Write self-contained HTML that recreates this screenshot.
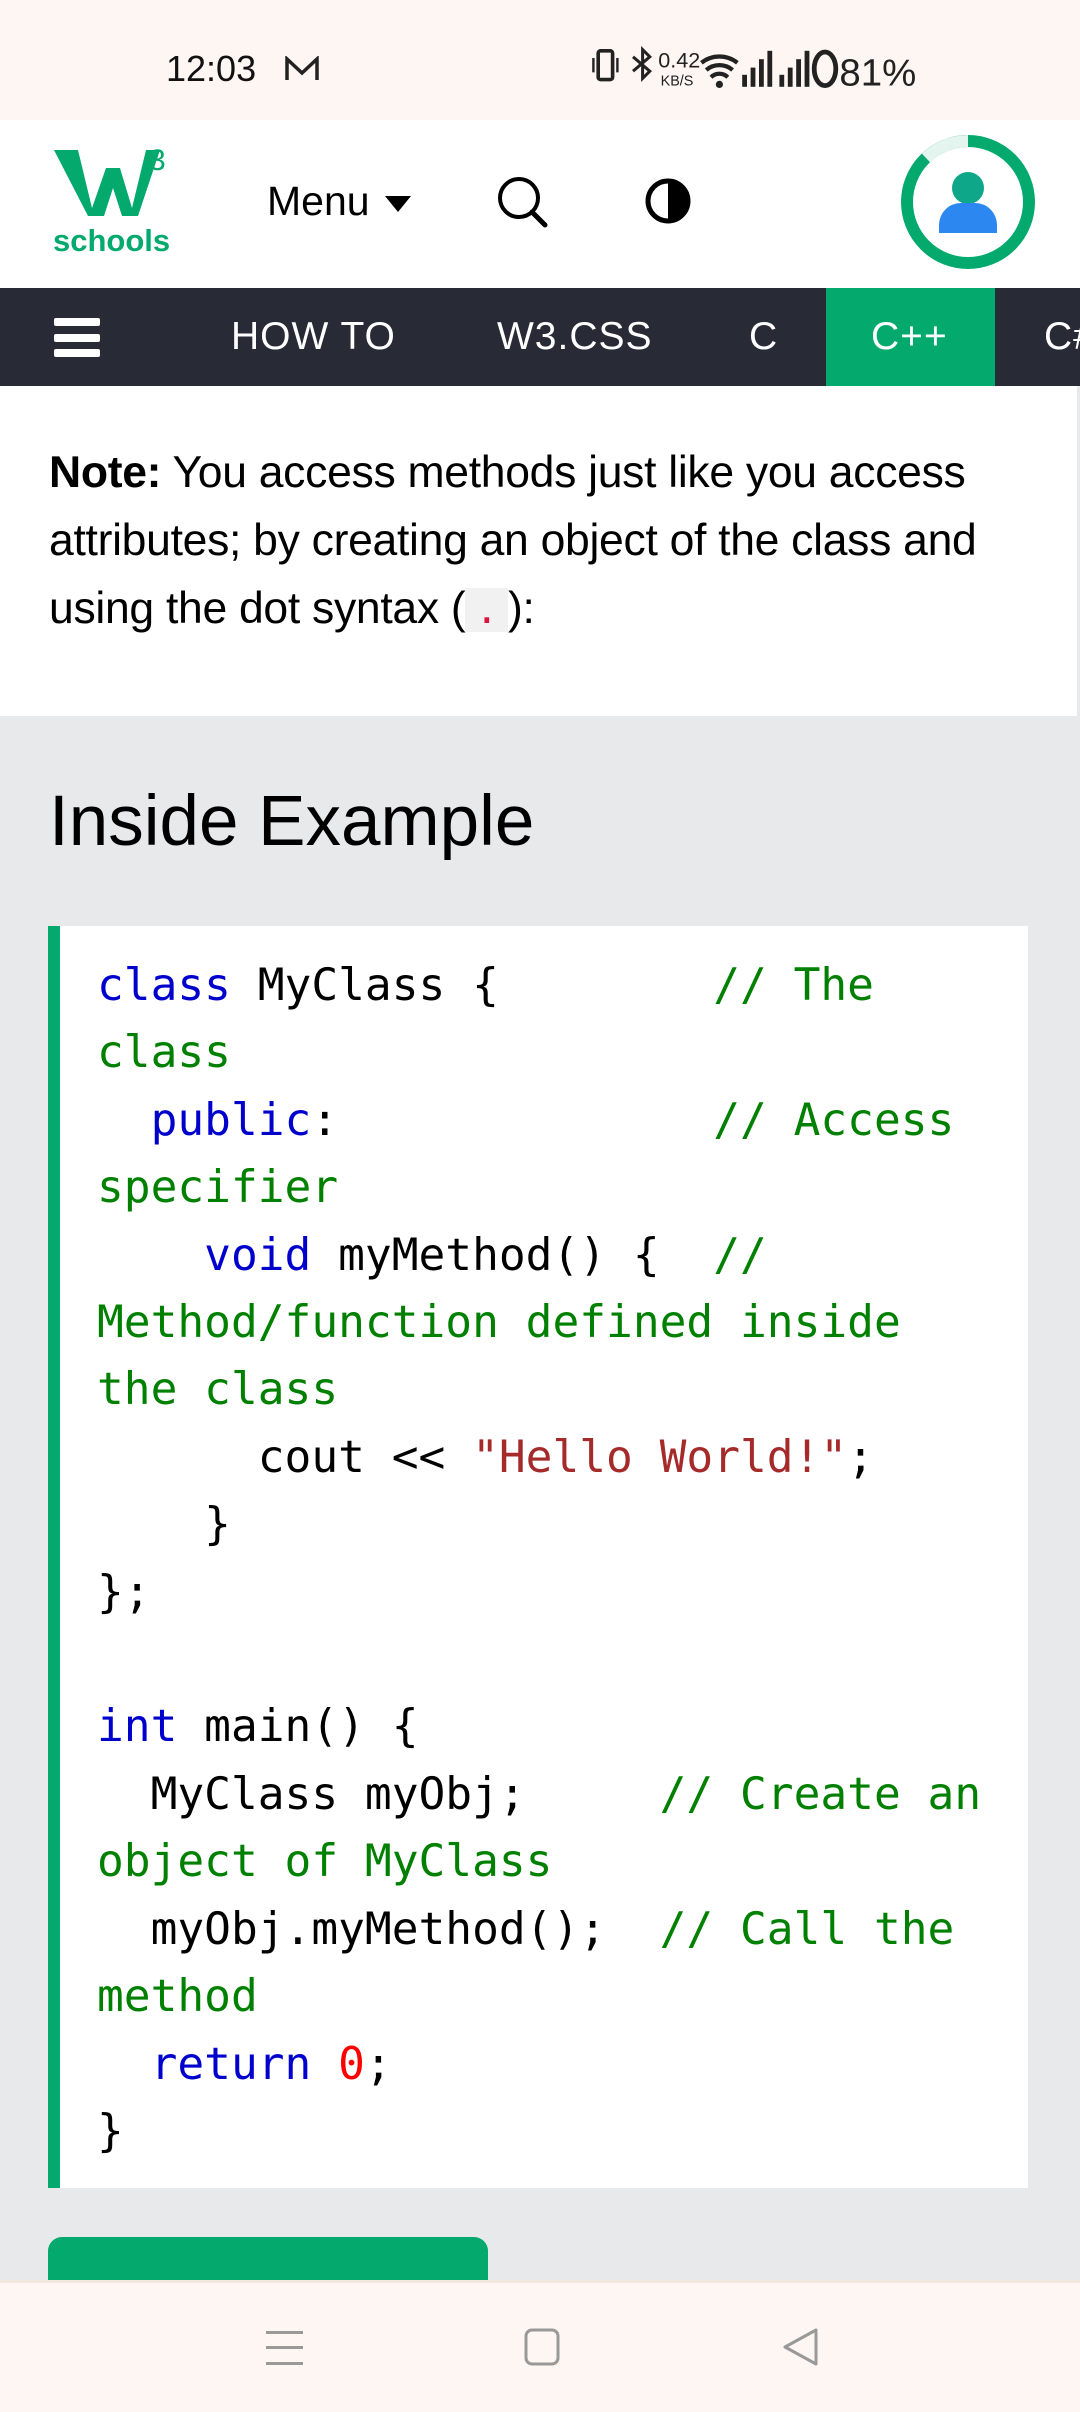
<!DOCTYPE html>
<html><head><meta charset="utf-8"><style>
*{margin:0;padding:0;box-sizing:border-box}
body{width:1080px;height:2412px;position:relative;overflow:hidden;background:#e7e9eb;font-family:"Liberation Sans",sans-serif}
.abs{position:absolute}
#status{left:0;top:0;width:1080px;height:120px;background:#fef6f3}
#hdr{left:0;top:120px;width:1080px;height:168px;background:#fff}
#nav{left:0;top:288px;width:1080px;height:98px;background:#282a35;color:#fff;font-size:39px;letter-spacing:1px}
#nav span{position:absolute;top:27px}
#note{left:0;top:386px;width:1077px;height:330px;background:#fff;font-size:44.5px;line-height:68px;color:#000;padding:53px 0 0 49px;letter-spacing:-0.3px}
code{font-family:"DejaVu Sans Mono",monospace;background:#f1f1f1;color:#dc143c;padding:0 10px;font-size:38px}
#h2{left:49px;top:781px;font-size:71px;color:#000}
#code{left:48px;top:926px;width:980px;height:1262px;background:#fff;border-left:12px solid #04aa6d}
pre{position:absolute;left:37px;top:26px;font-family:"DejaVu Sans Mono",monospace;font-size:44.5px;line-height:67.4px;color:#000}
.k{color:#0000cd}.c{color:#008000}.s{color:#a52a2a}.n{color:#f00}
#btn{left:48px;top:2237px;width:440px;height:120px;background:#04aa6d;border-radius:14px}
#bot{left:0;top:2280px;width:1080px;height:132px;background:#fdf6f3;border-top:3px solid #f3e6dc}
</style></head><body>
<div id="status" class="abs">
<div class="abs" style="left:166px;top:48px;font-size:36px;color:#111">12:03</div>
<svg class="abs" style="left:284px;top:56px" width="36" height="26" viewBox="0 0 36 26"><path d="M3 24V3l15 14L33 3v21" fill="none" stroke="#222" stroke-width="3.5"/></svg>
<svg class="abs" style="left:584px;top:46px" width="410" height="48" viewBox="0 0 330 40">
<rect x="6" y="4" width="12" height="24" rx="2" fill="none" stroke="#222" stroke-width="3"/>
<path d="M2 10v12M22 10v12" stroke="#222" stroke-width="2"/>
<path d="M35 9l14 12-6 6V3l6 6-14 12" fill="none" stroke="#222" stroke-width="2.5"/>
<text x="56" y="18" font-size="18" font-family="Liberation Sans" fill="#222">0.42</text>
<text x="58" y="33" font-size="12" font-family="Liberation Sans" fill="#222">KB/S</text>
<path d="M92 14a24 24 0 0 1 30 0M96 20a17 17 0 0 1 22 0M100 26a10 10 0 0 1 14 0" fill="none" stroke="#222" stroke-width="3.5"/>
<circle cx="107" cy="32" r="3" fill="#222"/>
<rect x="126" y="24" width="4" height="10" fill="#222"/><rect x="133" y="18" width="4" height="16" fill="#222"/><rect x="140" y="11" width="4" height="23" fill="#222"/><rect x="147" y="4" width="4" height="30" fill="#222"/>
<rect x="157" y="24" width="4" height="10" fill="#222"/><rect x="164" y="18" width="4" height="16" fill="#222"/><rect x="171" y="11" width="4" height="23" fill="#222"/><rect x="178" y="4" width="4" height="30" fill="#222"/>
<ellipse cx="195" cy="19" rx="9" ry="14" fill="none" stroke="#222" stroke-width="4"/>
<text x="207" y="33" font-size="32" font-family="Liberation Sans" fill="#222">81%</text>
</svg>
</div>
<div id="hdr" class="abs">
<svg class="abs" style="left:50px;top:0" width="130" height="168" viewBox="0 0 130 168">
<polygon points="4,30 28,30 42,88 56,48 70,48 82,88 96,30 110,30 88,96 72,96 63,68 54,96 38,96" fill="#04aa6d"/>
<text x="99" y="50" font-size="30" font-family="Liberation Sans" fill="#04aa6d">3</text>
<text x="3" y="131" font-size="31" font-weight="bold" font-family="Liberation Sans" fill="#04aa6d">schools</text>
</svg>
<div class="abs" style="left:267px;top:58px;font-size:41px;color:#000">Menu</div>
<svg class="abs" style="left:385px;top:76px" width="28" height="20"><polygon points="0,0 26,0 13,16" fill="#000"/></svg>
<svg class="abs" style="left:495px;top:54px" width="60" height="60" viewBox="0 0 60 60"><circle cx="24" cy="24" r="19" fill="none" stroke="#000" stroke-width="4"/><path d="M37 38l13 13" stroke="#000" stroke-width="5" stroke-linecap="round"/></svg>
<svg class="abs" style="left:644px;top:57px" width="48" height="48" viewBox="0 0 48 48"><circle cx="24" cy="24" r="20" fill="#fff" stroke="#000" stroke-width="5"/><path d="M24 4a20 20 0 0 1 0 40z" fill="#000"/></svg>
<svg class="abs" style="left:899px;top:13px" width="138" height="138" viewBox="0 0 138 138"><circle cx="69" cy="69" r="61" fill="#fff" stroke="#04aa6d" stroke-width="12"/><path d="M69 8a61 61 0 0 0-42 17" stroke="#e4f4ee" stroke-width="12" fill="none"/><circle cx="69" cy="55" r="16" fill="#0fa78a"/><path d="M40 100v-8a22 22 0 0 1 22-22h14a22 22 0 0 1 22 22v8z" fill="#2d87f0"/></svg>
</div>
<div id="nav" class="abs">
<svg class="abs" style="left:54px;top:30px" width="46" height="40"><rect width="46" height="8" rx="2" fill="#fff"/><rect y="16" width="46" height="8" rx="2" fill="#fff"/><rect y="31" width="46" height="8" rx="2" fill="#fff"/></svg>
<span style="left:231px">HOW TO</span><span style="left:497px">W3.CSS</span><span style="left:749px">C</span>
<div class="abs" style="left:826px;top:0;width:169px;height:98px;background:#04aa6d"></div>
<span style="left:871px">C++</span><span style="left:1044px">C#</span>
</div>
<div id="note" class="abs"><b>Note:</b> You access methods just like you access attributes; by creating an object of the class and using the dot syntax (<code>.</code>):</div>
<div id="h2" class="abs">Inside Example</div>
<div id="code" class="abs"><pre><span class="k">class</span> MyClass {        <span class="c">// The
class</span>
  <span class="k">public</span>:              <span class="c">// Access
specifier</span>
    <span class="k">void</span> myMethod() {  <span class="c">//
Method/function defined inside
the class</span>
      cout &lt;&lt; <span class="s">"Hello World!"</span>;
    }
};

<span class="k">int</span> main() {
  MyClass myObj;     <span class="c">// Create an
object of MyClass</span>
  myObj.myMethod();  <span class="c">// Call the
method</span>
  <span class="k">return</span> <span class="n">0</span>;
}</pre></div>
<div id="btn" class="abs"></div>
<div id="bot" class="abs">
<svg class="abs" style="left:266px;top:45px" width="40" height="40"><rect y="3" width="37" height="3" fill="#999"/><rect y="18" width="37" height="3" fill="#999"/><rect y="34" width="37" height="3" fill="#999"/></svg>
<svg class="abs" style="left:524px;top:45px" width="40" height="40"><rect x="2" y="2" width="32" height="34" rx="6" fill="none" stroke="#999" stroke-width="3"/></svg>
<svg class="abs" style="left:782px;top:45px" width="40" height="40"><path d="M34 2v34L3 19z" fill="none" stroke="#999" stroke-width="3" stroke-linejoin="round"/></svg>
</div>
</body></html>
